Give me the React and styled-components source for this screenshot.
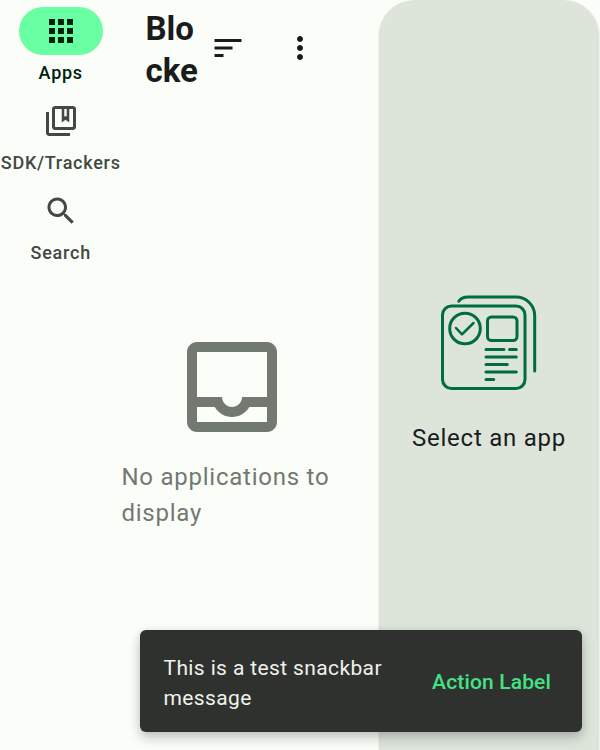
import React from "react";
import styled, { createGlobalStyle } from "styled-components";

const GlobalStyle = createGlobalStyle`
  *, *::before, *::after { box-sizing: border-box; }
  body { margin: 0; background: #fbfdf8; }
`;

const Screen = styled.div`
  position: relative;
  display: grid;
  grid-template-columns: 121.5px 256.5px 222px;
  width: 600px;
  height: 750px;
  overflow: hidden;
  background: #fbfdf8;
  color: #191c1a;
  font-family: Roboto, sans-serif;
`;

const Rail = styled.nav`
  display: flex;
  flex-direction: column;
  align-items: center;
  gap: 6px;
  padding-top: 7px;
`;

const RailItem = styled.div`
  display: flex;
  flex-direction: column;
  align-items: center;
  height: 84px;
  gap: 6px;
  color: ${(p) => (p.$selected ? "#002110" : "#414942")};
`;

const Indicator = styled.div`
  display: grid;
  place-items: center;
  width: 84px;
  height: 48px;
  border-radius: 24px;
  background: ${(p) => (p.$selected ? "#69ffa3" : "transparent")};
`;

const RailLabel = styled.span`
  font-size: 18px;
  line-height: 24px;
  font-weight: 500;
  letter-spacing: 0.75px;
  white-space: nowrap;
`;

const Icon = styled.svg`
  display: block;
  flex: none;
  width: ${(p) => p.$size || 36}px;
  height: ${(p) => p.$size || 36}px;
  fill: currentColor;
`;

const ListPane = styled.main`
  display: flex;
  flex-direction: column;
`;

const TopBar = styled.header`
  display: flex;
  align-items: center;
  height: 96px;
  padding-left: 24px;
`;

const Title = styled.h1`
  width: 52px;
  height: 84px;
  margin: 4px -5.5px 0 0;
  overflow: hidden;
  font-size: 33px;
  line-height: 42px;
  font-weight: 700;
`;

const IconButton = styled.button`
  display: grid;
  place-items: center;
  width: 72px;
  height: 72px;
  padding: 0;
  border: 0;
  background: none;
  color: #191c1a;
`;

const EmptyState = styled.section`
  display: flex;
  flex-direction: column;
  align-items: center;
  gap: 12px;
  padding: 231px 35.5px 0 0;
  color: #717971;
`;

const BodyText = styled.p`
  margin: 0;
  font-size: 24px;
  line-height: 36px;
  letter-spacing: 0.75px;
`;

const DetailPane = styled.aside`
  display: flex;
  flex-direction: column;
  align-items: center;
  gap: 17px;
  padding-top: 283px;
  border: solid #ecf1ea;
  border-width: 0 1px;
  border-radius: 36px 36px 0 0;
  background: #dde5db;
`;

const Illustration = styled.svg`
  display: block;
  width: 120px;
  height: 120px;
  fill: none;
  stroke: #006d3d;
  stroke-width: 3;
  stroke-linecap: round;
  stroke-linejoin: round;
`;

const Snackbar = styled.div`
  position: absolute;
  left: 139.5px;
  bottom: 18px;
  display: flex;
  align-items: center;
  justify-content: space-between;
  width: 442.5px;
  height: 102px;
  padding: 3px 31px 0 24px;
  border-radius: 6px;
  background: #2e312e;
  color: #f0f1ec;
  box-shadow: 0 6px 12px rgba(0, 0, 0, 0.21), 0 0 9px rgba(0, 0, 0, 0.07);
`;

const Message = styled.p`
  width: 230px;
  margin: 0;
  font-size: 21px;
  line-height: 30px;
  letter-spacing: 0.375px;
`;

const Action = styled.button`
  padding: 0 0 2px;
  border: 0;
  background: none;
  color: #45e187;
  font: 500 21px/30px Roboto, sans-serif;
  letter-spacing: 0.15px;
  white-space: nowrap;
`;

const paths = {
  apps: "M4 8h4V4H4v4zm6 12h4v-4h-4v4zm-6 0h4v-4H4v4zm0-6h4v-4H4v4zm6 0h4v-4h-4v4zm6-10v4h4V4h-4zm-6 4h4V4h-4v4zm6 6h4v-4h-4v4zm0 6h4v-4h-4v4z",
  trackers:
    "M4 6H2v14c0 1.100.9 2 2 2h14v-2H4V6zM20 2H8c-1.100 0-2 .9-2 2v12c0 1.100.9 2 2 2h12c1.100 0 2-.9 2-2V4c0-1.100-.9-2-2-2zM8 16V4h4.500v9l2.500-1.800L17.500 13V4H20v12H8zM14.200 4h1.600v5.200l-.8-.6-.8.6V4z",
  search:
    "M15.5 14h-.79l-.28-.27C15.41 12.59 16 11.11 16 9.5 16 5.91 13.09 3 9.5 3S3 5.91 3 9.5 5.91 16 9.5 16c1.61 0 3.09-.59 4.23-1.57l.27.28v.79l5 4.99L20.49 19l-4.99-5zm-6 0C7.01 14 5 11.99 5 9.5S7.01 5 9.5 5 14 7.01 14 9.5 11.99 14 9.5 14z",
  sort: "M3 18h6v-2H3v2zM3 6v2h18V6H3zm0 7h12v-2H3v2z",
  more: "M12 8c1.1 0 2-.9 2-2s-.9-2-2-2-2 .9-2 2 .9 2 2 2zm0 2c-1.1 0-2 .9-2 2s.9 2 2 2 2-.9 2-2-.9-2-2-2zm0 6c-1.1 0-2 .9-2 2s.9 2 2 2 2-.9 2-2-.9-2-2-2z",
  inbox:
    "M19 3H5c-1.1 0-2 .9-2 2v14c0 1.1.9 2 2 2h14c1.1 0 2-.9 2-2V5c0-1.1-.9-2-2-2zm0 16H5v-3h3.56c.69 1.19 1.97 2 3.45 2s2.75-.81 3.45-2H19v3zm0-5h-4.99c0 1.1-.9 2-2 2s-2-.9-2-2H5V5h14v9z",
};

const Glyph = ({ name, size }) => (
  <Icon viewBox="0 0 24 24" $size={size} aria-hidden="true">
    <path d={paths[name]} />
  </Icon>
);

const destinations = [
  { icon: "apps", label: "Apps", selected: true },
  { icon: "trackers", label: "SDK/Trackers" },
  { icon: "search", label: "Search" },
];

export default function App() {
  return (
    <>
      <GlobalStyle />
      <Screen>
        <Rail>
          {destinations.map(({ icon, label, selected }) => (
            <RailItem key={label} $selected={selected}>
              <Indicator $selected={selected}>
                <Glyph name={icon} />
              </Indicator>
              <RailLabel>{label}</RailLabel>
            </RailItem>
          ))}
        </Rail>
        <ListPane>
          <TopBar>
            <Title>
              Blo
              <br />
              cke
            </Title>
            <IconButton aria-label="Sort">
              <Glyph name="sort" />
            </IconButton>
            <IconButton aria-label="More">
              <Glyph name="more" />
            </IconButton>
          </TopBar>
          <EmptyState>
            <Glyph name="inbox" size={120} />
            <BodyText>No applications to display</BodyText>
          </EmptyState>
        </ListPane>
        <DetailPane>
          <Illustration viewBox="429 283 120 120" aria-hidden="true">
            <path d="M458.8 301.3Q461.5 297 468 297H516A18.7 18.7 0 0 1 534.7 315.7V371" />
            <rect x="442.5" y="306" width="82.5" height="82.5" rx="9" />
            <circle cx="465" cy="328.5" r="15.3" />
            <path d="M456 328L462 334.3L473.5 323" strokeWidth="2.5" />
            <rect x="487.5" y="317" width="29.5" height="23.5" rx="4" />
            <path d="M486 349.5H504M509.5 349.5H516.3M486 357H516.3M486 364.5H507.3M486 372H516.3M486 379.5H493.8" />
          </Illustration>
          <BodyText>Select an app</BodyText>
        </DetailPane>
        <Snackbar role="status">
          <Message>This is a test snackbar message</Message>
          <Action>Action Label</Action>
        </Snackbar>
      </Screen>
    </>
  );
}
